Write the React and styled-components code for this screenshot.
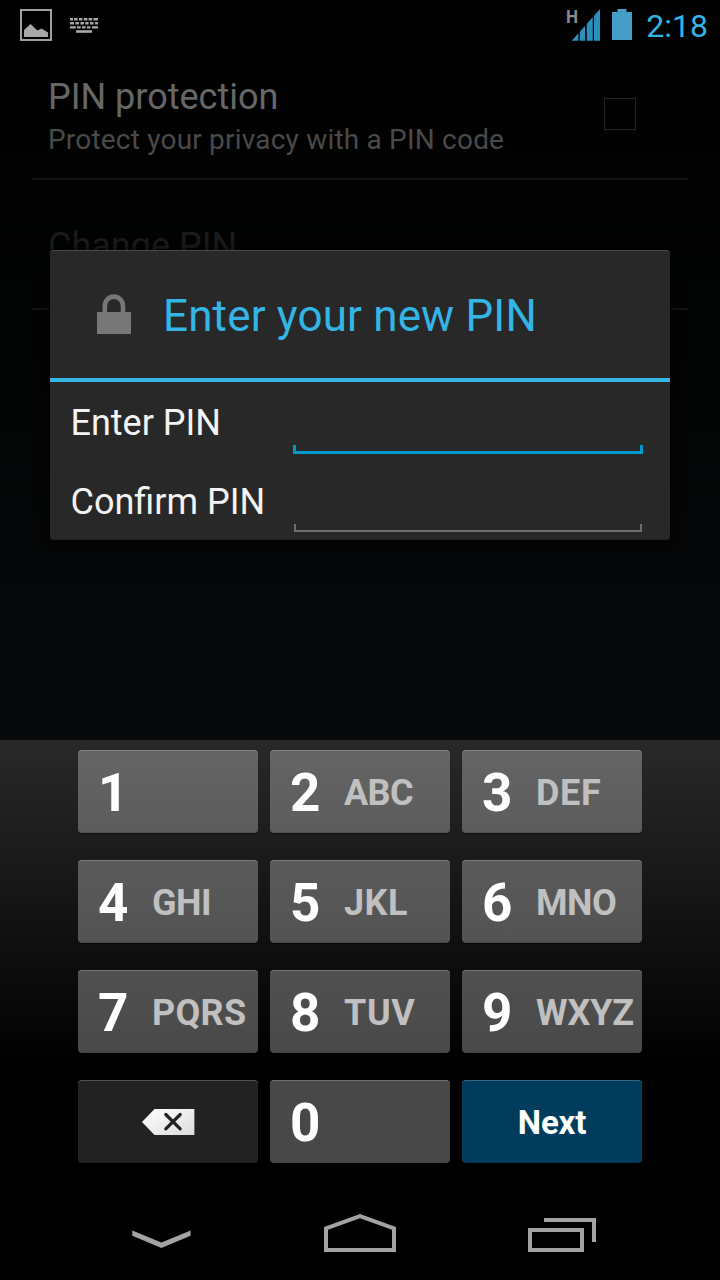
import React from 'react';
import styled, { createGlobalStyle } from 'styled-components';

const GlobalStyle = createGlobalStyle`
  * {
    box-sizing: border-box;
  }

  body {
    margin: 0;
    background: #000;
    font-family: Roboto, 'Liberation Sans', sans-serif;
  }
`;

const Screen = styled.div`
  position: relative;
  width: 720px;
  height: 1280px;
  display: flex;
  flex-direction: column;
  overflow: hidden;
  background: #000;
`;

const StatusBar = styled.div`
  height: 50px;
  display: flex;
  align-items: flex-start;
  padding: 9px 12px 0 20px;
`;

const StatusIcon = styled.svg`
  display: block;
  flex: none;
  margin-left: ${p => p.$gap || 0}px;
`;

const Spacer = styled.div`
  flex: 1;
`;

const Signal = styled.div`
  position: relative;
  width: 34px;
`;

const NetworkType = styled.span`
  position: absolute;
  top: -3px;
  left: 0;
  font-size: 19px;
  font-weight: 700;
  line-height: 22px;
  color: #8a8a8a;
  transform: scaleX(0.9);
  transform-origin: left;
`;

const Clock = styled.div`
  margin-left: 14px;
  font-size: 32px;
  line-height: 34px;
  color: #33b5e5;
`;

const Settings = styled.div`
  height: 690px;
  padding: 0 32px;
  background: linear-gradient(#000, #020303 30%, #08090b);
`;

const Preference = styled.div`
  height: 130px;
  display: flex;
  justify-content: space-between;
  padding: ${p => (p.$single ? 45 : 26)}px 52px 0 16px;
  border-bottom: 2px solid #121313;
`;

const PreferenceTitle = styled.div`
  font-size: 36px;
  line-height: 42px;
  white-space: nowrap;
  color: ${p => (p.$disabled ? '#1b1b1b' : '#666')};
`;

const PreferenceSummary = styled.div`
  margin-top: 5px;
  font-size: 28px;
  line-height: 33px;
  letter-spacing: 0.2px;
  white-space: nowrap;
  color: #494949;
`;

const CheckBox = styled.div`
  width: 32px;
  height: 32px;
  margin-top: 22px;
  border: 1px solid #222;
`;

const Dialog = styled.div`
  position: absolute;
  top: 250px;
  left: 50px;
  width: 620px;
  height: 290px;
  border-radius: 4px;
  background: #282828;
  box-shadow: inset 0 1px 0 #484848, inset 0 -1px 0 #222, 0 4px 14px 2px rgba(0, 0, 0, 0.7);
`;

const DialogHeader = styled.div`
  height: 132px;
  display: flex;
  align-items: center;
  padding: 0 46px;
  border-bottom: 4px solid #33b5e5;
`;

const DialogTitle = styled.div`
  margin-left: 31px;
  padding-top: 4px;
  font-size: 44px;
  line-height: 52px;
  letter-spacing: 0.15px;
  white-space: nowrap;
  color: #33b5e5;
`;

const FormRow = styled.label`
  height: 79px;
  display: flex;
  padding-left: 20.5px;
`;

const FormLabel = styled.div`
  width: 221.5px;
  padding-top: 20px;
  font-size: 36px;
  line-height: 42px;
  white-space: nowrap;
  color: #f3f3f3;
`;

const Field = styled.div`
  width: 352px;
  height: ${p => (p.$active ? 72 : 71)}px;
  padding: 0 ${p => (p.$active ? 1 : 2)}px;
  display: flex;
  flex-direction: column;
`;

const Input = styled.input`
  flex: 1;
  min-height: 0;
  padding: 0 12px;
  border: 0;
  outline: 0;
  background: transparent;
  color: #f3f3f3;
  font-size: 36px;
`;

const Underline = styled.div`
  height: ${p => (p.$active ? 9 : 8)}px;
  border: ${p => (p.$active ? '3px solid #0099cc' : '2px solid #6d6d6d')};
  border-top: 0;
`;

const Keyboard = styled.div`
  height: 444px;
  padding: 10px 78px 0;
  display: grid;
  grid-template-columns: repeat(3, 180px);
  grid-auto-rows: 83px;
  gap: 27px 12px;
  background: linear-gradient(#292929, #000 330px);
`;

const keyColors = {
  digit: 'rgba(255, 255, 255, 0.282)',
  delete: '#222',
  next: '#003d5c',
};

const Key = styled.button`
  display: flex;
  align-items: center;
  justify-content: ${p => (p.$kind === 'digit' ? 'flex-start' : 'center')};
  padding: ${p => (p.$kind === 'digit' ? '3px 0 0 20px' : '0')};
  border: 0;
  border-radius: 4px;
  font-family: inherit;
  background: ${p => keyColors[p.$kind]};
  box-shadow: inset 0 1px 0 rgba(255, 255, 255, 0.22), inset 0 -1px 0 rgba(0, 0, 0, 0.12),
    0 1px 1px rgba(0, 0, 0, 0.4);
`;

const Digit = styled.span`
  width: 54px;
  text-align: left;
  font-size: 53px;
  font-weight: 700;
  line-height: 60px;
  color: #fff;
`;

const Letters = styled.span`
  font-size: 36px;
  font-weight: 700;
  line-height: 42px;
  color: #c0c0c0;
  letter-spacing: ${p => p.$spacing || 0}px;
`;

const NextLabel = styled.span`
  padding-top: 2px;
  font-size: 33px;
  font-weight: 700;
  letter-spacing: -0.2px;
  color: #fff;
`;

const NavBar = styled.div`
  flex: 1;
  display: flex;
  align-items: flex-start;
  padding: 30px 124px 0 132px;
  justify-content: space-between;
`;

const PictureIcon = () => (
  <StatusIcon width="32" height="32" viewBox="0 0 32 32">
    <rect x="1" y="1" width="30" height="30" fill="none" stroke="#a0a0a0" strokeWidth="2" />
    <path d="M4 28V21L10.5 15L17.5 21.5L21.5 19.5L28 23.5V28Z" fill="#a8a8a8" />
  </StatusIcon>
);

const KeyboardIcon = () => (
  <StatusIcon $gap={18} width="29" height="32" viewBox="0 0 29 32" fill="#a8a8a8">
    <path d="M0 9h3v2.4H0zM4 9h3.6v2.4H4zM9 9h3.4v2.4H9zM13.8 9h3.6v2.4h-3.6zM18.6 9h3.6v2.4h-3.6zM23.4 9H28v2.4h-4.6z" />
    <path d="M0 13h4v2.4H0zM5.4 13H9v2.4H5.4zM10.4 13H14v2.4h-3.6zM15.2 13h3.4v2.4h-3.4zM20 13h3.6v2.4H20zM25 13h3v2.4h-3z" />
    <path d="M0 17.2h5.8v2.4H0zM7 17.2h3.6v2.4H7zM12 17.2h3.6v2.4H12zM17 17.2h3.4v2.4H17zM22 17.2h6v2.4h-6z" />
    <path d="M6 21.2h16v2.6H6z" />
  </StatusIcon>
);

const SignalIcon = () => (
  <Signal>
    <StatusIcon width="34" height="32" viewBox="0 0 34 32">
      <path
        d="M5.7 31.8L12.4 24.3V31.8ZM13.8 22.8L19.1 16.8V31.8H13.8ZM20.7 15L26.8 8.1V31.8H20.7ZM28 6.8L34 0V31.8H28Z"
        fill="#2a8fba"
      />
    </StatusIcon>
    <NetworkType>H</NetworkType>
  </Signal>
);

const BatteryIcon = () => (
  <StatusIcon $gap={12} width="20" height="32" viewBox="0 0 20 32">
    <path d="M5.5 0h9v3H20v28H0V3h5.5z" fill="#439fc8" />
  </StatusIcon>
);

const LockIcon = () => (
  <svg width="36" height="42" viewBox="0 0 36 42">
    <path d="M8.8 19.5V13A9 9.3 0 0 1 27 13V19.5" fill="none" stroke="#777" strokeWidth="4.6" />
    <path d="M1 19h34v22H1z" fill="#777" />
  </svg>
);

const DeleteIcon = () => (
  <svg width="53" height="26" viewBox="0 0 53 26">
    <defs>
      <linearGradient id="deleteFill" x1="0" y1="0" x2="1" y2="1">
        <stop offset="0" stopColor="#fff" />
        <stop offset="1" stopColor="#dcdcdc" />
      </linearGradient>
    </defs>
    <path d="M0 13L12.5 0H52.4V26H12.5Z" fill="url(#deleteFill)" />
    <path d="M23.8 5.5L38.2 19.9M38.2 5.5L23.8 19.9" stroke="#222" strokeWidth="3.2" strokeLinecap="round" />
  </svg>
);

const HideIcon = () => (
  <svg width="59" height="38" viewBox="0 0 59 38">
    <path d="M0.3 16.4L29.4 28.4L58.6 16.4V21.8L29.4 34L0.3 21.8Z" fill="#a3a3a3" />
  </svg>
);

const HomeIcon = () => (
  <svg width="72" height="38" viewBox="0 0 72 38" fill="none" stroke="#a3a3a3" strokeWidth="4">
    <path d="M2 36V14.3L36 2.2L70 14.3V36Z" />
  </svg>
);

const RecentsIcon = () => (
  <svg width="68" height="38" viewBox="0 0 68 38" fill="none" stroke="#a3a3a3" strokeWidth="4">
    <path d="M2 16H54V36H2Z" />
    <path d="M16 6H66V28" />
  </svg>
);

// digit, letters, tracking of the letters
const keys = [
  ['1', ''],
  ['2', 'ABC', -0.6],
  ['3', 'DEF', 0.7],
  ['4', 'GHI', -0.5],
  ['5', 'JKL', 0.5],
  ['6', 'MNO', -0.4],
  ['7', 'PQRS', 0.3],
  ['8', 'TUV', 0.6],
  ['9', 'WXYZ', -0.1],
];

const DigitKey = ({ digit, letters, spacing }) => (
  <Key $kind="digit">
    <Digit>{digit}</Digit>
    {letters && <Letters $spacing={spacing}>{letters}</Letters>}
  </Key>
);

const PinField = ({ label, active }) => (
  <FormRow>
    <FormLabel>{label}</FormLabel>
    <Field $active={active}>
      <Input type="password" />
      <Underline $active={active} />
    </Field>
  </FormRow>
);

export default () => (
  <Screen>
    <GlobalStyle />
    <StatusBar>
      <PictureIcon />
      <KeyboardIcon />
      <Spacer />
      <SignalIcon />
      <BatteryIcon />
      <Clock>2:18</Clock>
    </StatusBar>
    <Settings>
      <Preference>
        <div>
          <PreferenceTitle>PIN protection</PreferenceTitle>
          <PreferenceSummary>Protect your privacy with a PIN code</PreferenceSummary>
        </div>
        <CheckBox />
      </Preference>
      <Preference $single>
        <PreferenceTitle $disabled>Change PIN</PreferenceTitle>
      </Preference>
    </Settings>
    <Keyboard>
      {keys.map(([digit, letters, spacing]) => (
        <DigitKey key={digit} digit={digit} letters={letters} spacing={spacing} />
      ))}
      <Key $kind="delete">
        <DeleteIcon />
      </Key>
      <DigitKey digit="0" />
      <Key $kind="next">
        <NextLabel>Next</NextLabel>
      </Key>
    </Keyboard>
    <NavBar>
      <HideIcon />
      <HomeIcon />
      <RecentsIcon />
    </NavBar>
    <Dialog>
      <DialogHeader>
        <LockIcon />
        <DialogTitle>Enter your new PIN</DialogTitle>
      </DialogHeader>
      <PinField label="Enter PIN" active />
      <PinField label="Confirm PIN" />
    </Dialog>
  </Screen>
);
